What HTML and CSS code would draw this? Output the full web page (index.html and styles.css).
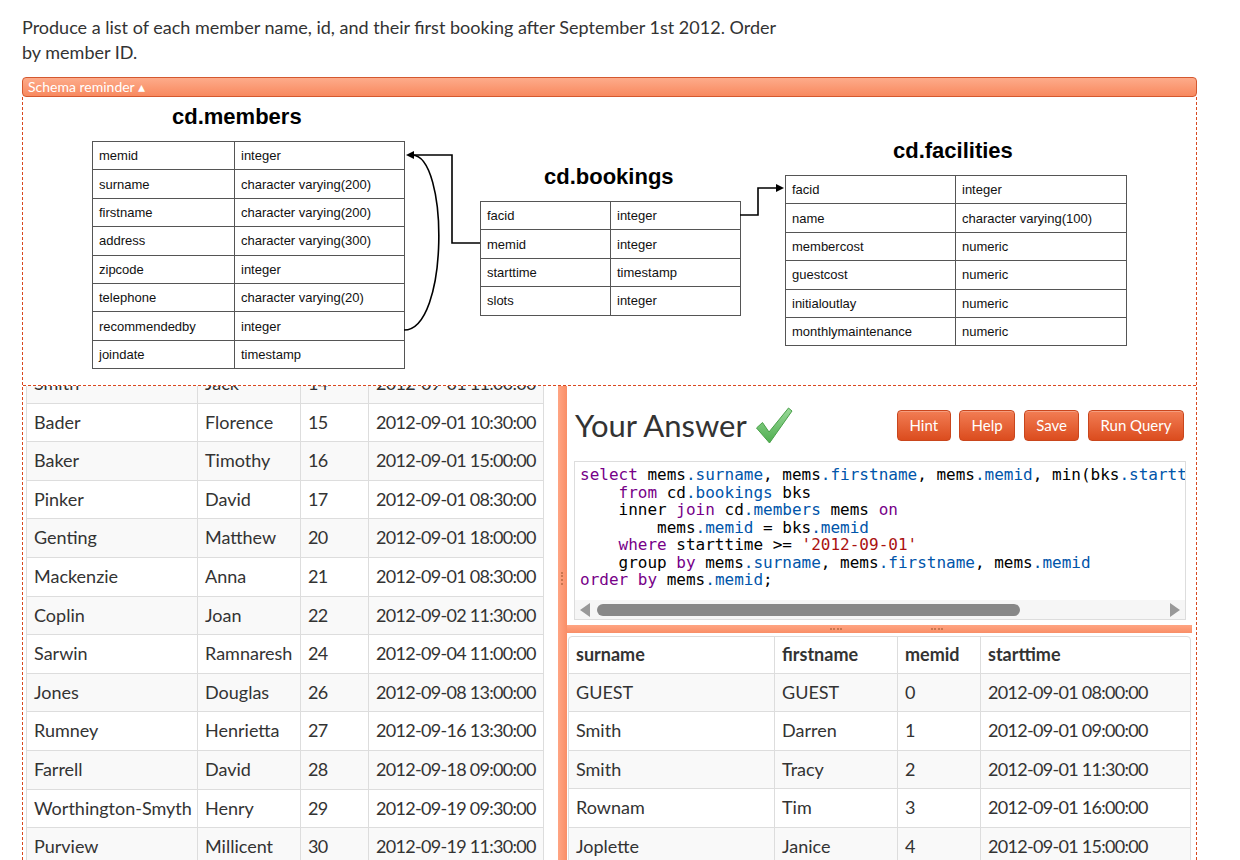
FILE: index.html
```html
<!DOCTYPE html>
<html>
<head>
<meta charset="utf-8">
<title>Exercise</title>
<link rel="stylesheet" href="styles.css">
</head>
<body>
<div class="page">
  <p class="question">Produce a list of each member name, id, and their first booking after September 1st 2012. Order by member ID.</p>
  <div class="schema-bar">Schema reminder ▴</div>
  <div class="main">
    <div class="schema-panel">
      <div class="diagram">
        <div class="title t-members">cd.members</div>
        <table class="schema s-members">
          <colgroup><col class="c142"><col class="c170"></colgroup>
          <tr><td>memid</td><td>integer</td></tr>
          <tr><td>surname</td><td>character varying(200)</td></tr>
          <tr><td>firstname</td><td>character varying(200)</td></tr>
          <tr><td>address</td><td>character varying(300)</td></tr>
          <tr><td>zipcode</td><td>integer</td></tr>
          <tr><td>telephone</td><td>character varying(20)</td></tr>
          <tr><td>recommendedby</td><td>integer</td></tr>
          <tr><td>joindate</td><td>timestamp</td></tr>
        </table>
        <div class="title t-bookings">cd.bookings</div>
        <table class="schema s-bookings">
          <colgroup><col class="c130"><col class="c130"></colgroup>
          <tr><td>facid</td><td>integer</td></tr>
          <tr><td>memid</td><td>integer</td></tr>
          <tr><td>starttime</td><td>timestamp</td></tr>
          <tr><td>slots</td><td>integer</td></tr>
        </table>
        <div class="title t-facilities">cd.facilities</div>
        <table class="schema s-facilities">
          <colgroup><col class="c170"><col class="c171"></colgroup>
          <tr><td>facid</td><td>integer</td></tr>
          <tr><td>name</td><td>character varying(100)</td></tr>
          <tr><td>membercost</td><td>numeric</td></tr>
          <tr><td>guestcost</td><td>numeric</td></tr>
          <tr><td>initialoutlay</td><td>numeric</td></tr>
          <tr><td>monthlymaintenance</td><td>numeric</td></tr>
        </table>
        <svg class="links" width="1173" height="288" viewBox="0 0 1173 288">
          <path d="M457 146 H429 V58 H389" fill="none" stroke="#000" stroke-width="1.6"/>
          <path d="M381 233 C426 233 426 58 389 58" fill="none" stroke="#000" stroke-width="1.6"/>
          <path d="M383 58 L391 54 L391 62 Z" fill="#000"/>
          <path d="M717 118 H735 V91 H755" fill="none" stroke="#000" stroke-width="1.6"/>
          <path d="M761 91 L753 87 L753 95 Z" fill="#000"/>
        </svg>
      </div>
    </div>

    <div class="left-pane">
      <table class="data data-left">
        <colgroup><col class="l1"><col class="l2"><col class="l3"><col class="l4"></colgroup>
        <tr><td>Smith</td><td>Jack</td><td>14</td><td>2012-09-01 11:00:00</td></tr>
        <tr><td>Bader</td><td>Florence</td><td>15</td><td>2012-09-01 10:30:00</td></tr>
        <tr><td>Baker</td><td>Timothy</td><td>16</td><td>2012-09-01 15:00:00</td></tr>
        <tr><td>Pinker</td><td>David</td><td>17</td><td>2012-09-01 08:30:00</td></tr>
        <tr><td>Genting</td><td>Matthew</td><td>20</td><td>2012-09-01 18:00:00</td></tr>
        <tr><td>Mackenzie</td><td>Anna</td><td>21</td><td>2012-09-01 08:30:00</td></tr>
        <tr><td>Coplin</td><td>Joan</td><td>22</td><td>2012-09-02 11:30:00</td></tr>
        <tr><td>Sarwin</td><td>Ramnaresh</td><td>24</td><td>2012-09-04 11:00:00</td></tr>
        <tr><td>Jones</td><td>Douglas</td><td>26</td><td>2012-09-08 13:00:00</td></tr>
        <tr><td>Rumney</td><td>Henrietta</td><td>27</td><td>2012-09-16 13:30:00</td></tr>
        <tr><td>Farrell</td><td>David</td><td>28</td><td>2012-09-18 09:00:00</td></tr>
        <tr><td>Worthington-Smyth</td><td>Henry</td><td>29</td><td>2012-09-19 09:30:00</td></tr>
        <tr><td>Purview</td><td>Millicent</td><td>30</td><td>2012-09-19 11:30:00</td></tr>
      </table>
    </div>

    <div class="vsplit"><span class="grip-v"></span></div>

    <div class="right-pane">
      <div class="answer-head">
        <h2 class="answer-title">Your Answer
          <svg class="check" width="38" height="37" viewBox="0 0 38 37">
            <defs>
              <linearGradient id="g" x1="0" y1="0" x2="0" y2="1">
                <stop offset="0" stop-color="#9ad99a"/>
                <stop offset="1" stop-color="#4fae4f"/>
              </linearGradient>
            </defs>
            <path d="M1.5 21 L7.5 15.5 L14 25 L33.5 1 L37 4 L14.5 36 Z" fill="url(#g)" stroke="#49a049" stroke-width="1" stroke-linejoin="round"/>
          </svg>
        </h2>
        <div class="buttons">
          <button class="btn">Hint</button>
          <button class="btn">Help</button>
          <button class="btn">Save</button>
          <button class="btn">Run Query</button>
        </div>
      </div>

      <div class="editor">
        <pre class="code"><span class="kw">select</span> mems<span class="pr">.surname</span>, mems<span class="pr">.firstname</span>, mems<span class="pr">.memid</span>, min(bks<span class="pr">.starttime</span>) <span class="kw">as</span> starttime
    <span class="kw">from</span> cd<span class="pr">.bookings</span> bks
    inner <span class="kw">join</span> cd<span class="pr">.members</span> mems <span class="kw">on</span>
        mems<span class="pr">.memid</span> = bks<span class="pr">.memid</span>
    <span class="kw">where</span> starttime &gt;= <span class="st">'2012-09-01'</span>
    group <span class="kw">by</span> mems<span class="pr">.surname</span>, mems<span class="pr">.firstname</span>, mems<span class="pr">.memid</span>
<span class="kw">order</span> <span class="kw">by</span> mems<span class="pr">.memid</span>;</pre>
        <div class="hscroll">
          <span class="arrow-left"></span>
          <span class="thumb"></span>
          <span class="arrow-right"></span>
        </div>
      </div>

      <div class="hsplit"><span class="grip g1"></span><span class="grip g2"></span></div>

      <div class="results">
        <table class="data data-right">
          <colgroup><col class="r1"><col class="r2"><col class="r3"><col class="r4"></colgroup>
          <tr class="head"><th>surname</th><th>firstname</th><th>memid</th><th>starttime</th></tr>
          <tr><td>GUEST</td><td>GUEST</td><td>0</td><td>2012-09-01 08:00:00</td></tr>
          <tr><td>Smith</td><td>Darren</td><td>1</td><td>2012-09-01 09:00:00</td></tr>
          <tr><td>Smith</td><td>Tracy</td><td>2</td><td>2012-09-01 11:30:00</td></tr>
          <tr><td>Rownam</td><td>Tim</td><td>3</td><td>2012-09-01 16:00:00</td></tr>
          <tr><td>Joplette</td><td>Janice</td><td>4</td><td>2012-09-01 15:00:00</td></tr>
        </table>
      </div>
    </div>
  </div>
</div>
</body>
</html>
```

FILE: styles.css
```css
* { box-sizing: border-box; }
html, body { margin: 0; padding: 0; background: #fff; overflow: hidden; }
body { font-family: Lato, "Open Sans", sans-serif; color: #333; }

.page { padding: 15px 0 0 22px; width: 1197px; }

.question { margin: 0 0 12px; font-size: 18px; line-height: 25px; max-width: 770px; }

.schema-bar {
  height: 20px;
  width: 1175px;
  padding-left: 5px;
  font-size: 14px;
  line-height: 18px;
  color: #fff;
  border: 1px solid #d4582f;
  border-radius: 4px;
  background: linear-gradient(#fdab8a, #f8895f);
}

.main {
  position: relative;
  display: flex;
  width: 1175px;
  height: 763px;
  overflow: hidden;
  border-left: 1px dashed #d9481f;
  border-right: 1px dashed #d9481f;
}

/* schema dropdown overlay */
.schema-panel {
  position: absolute;
  top: 0; left: 0; right: 0;
  height: 289px;
  background: #fff;
  border-bottom: 1px dashed #d9481f;
  z-index: 5;
}
.diagram { position: relative; width: 100%; height: 288px; }
.title {
  position: absolute;
  font-family: "Liberation Sans", Arial, sans-serif;
  font-weight: bold;
  font-size: 22px;
  line-height: 26px;
  color: #000;
}
.t-members { left: 149px; top: 7px; }
.t-bookings { left: 521px; top: 67px; }
.t-facilities { left: 870px; top: 41px; }

.schema {
  position: absolute;
  border-collapse: collapse;
  table-layout: fixed;
  font-family: "Liberation Sans", Arial, sans-serif;
  font-size: 13px;
  color: #111;
}
.schema td {
  border: 1px solid #555;
  height: 28.4px;
  padding: 0 6px;
  white-space: nowrap;
}
.s-members { left: 69px; top: 44px; width: 312px; }
.s-bookings { left: 457px; top: 104px; width: 260px; }
.s-facilities { left: 762px; top: 78px; width: 341px; }
.c142 { width: 142px; }
.c170 { width: 170px; }
.c171 { width: 171px; }
.c130 { width: 130px; }
.links { position: absolute; left: 0; top: 0; }

/* data tables */
.left-pane { width: 535px; padding: 267px 0 0 3px; flex: none; }
.data {
  border-collapse: collapse;
  table-layout: fixed;
  font-size: 18px;
  color: #333;
}
.data td, .data th {
  border: 1px solid #ddd;
  padding: 0 6px 0 7px;
  line-height: 37.6px;
  text-align: left;
  white-space: nowrap;
  overflow: hidden;
}
.data td:nth-child(3), .data td:nth-child(4) { letter-spacing: -0.7px; }
.data th { font-weight: bold; }
.data-left { width: 517px; }
.data-left tr:nth-child(odd) td { background: #f9f9f9; }
.l1 { width: 171px; } .l2 { width: 103px; } .l3 { width: 68px; } .l4 { width: 175px; }

.vsplit {
  flex: none;
  width: 9px;
  background: linear-gradient(to right, #ffa583, #f98e67);
  position: relative;
}
.grip-v {
  position: absolute;
  left: 3px; top: 475px;
  width: 2px; height: 13px;
  border-left: 2px dotted #c9764f;
}

.right-pane { width: 625px; flex: none; padding-top: 309px; }

.answer-head {
  display: flex;
  align-items: center;
  justify-content: space-between;
  height: 38px;
  padding: 0 8px;
  margin-bottom: 17px;
}
.answer-title {
  margin: 0;
  font-weight: normal;
  font-size: 31px;
  line-height: 38px;
  color: #333;
  display: flex;
  align-items: center;
  gap: 8px;
}
.check { display: block; }
.buttons { display: flex; gap: 8.5px; }
.btn {
  font-family: Lato, "Open Sans", sans-serif;
  font-size: 15px;
  color: #fff;
  height: 31px;
  padding: 0 11.5px;
  border: 1px solid #c9461d;
  border-radius: 4px;
  background: linear-gradient(#f27d54, #db4c1e);
  box-shadow: inset 0 1px 0 rgba(255,255,255,0.25);
}

.editor {
  width: 612px;
  margin-left: 7px;
  height: 159px;
  border: 1px solid #ddd;
  background: #fff;
  overflow: hidden;
}
.code {
  margin: 0;
  height: 138px;
  padding: 4px 5px 0;
  font-family: "DejaVu Sans Mono", "Liberation Mono", monospace;
  font-size: 16px;
  line-height: 17.5px;
  color: #000;
  white-space: pre;
  overflow: hidden;
}
.kw { color: #770088; }
.pr { color: #0055aa; }
.st { color: #aa1111; }

.hscroll {
  display: flex;
  align-items: center;
  height: 19px;
  padding: 0 5px;
  background: #f6f6f6;
}
.arrow-left {
  width: 0; height: 0;
  border-top: 7px solid transparent;
  border-bottom: 7px solid transparent;
  border-right: 10px solid #999;
}
.arrow-right {
  margin-left: auto;
  width: 0; height: 0;
  border-top: 7px solid transparent;
  border-bottom: 7px solid transparent;
  border-left: 10px solid #999;
}
.thumb {
  margin-left: 7px;
  width: 423px;
  height: 12px;
  border-radius: 6px;
  background: #888;
}

.hsplit {
  position: relative;
  height: 8px;
  margin: 5px 0 3px;
  background: linear-gradient(#ffa583, #f98e67);
}
.grip {
  position: absolute;
  top: 3px;
  width: 12px; height: 2px;
  border-top: 2px dotted #c9764f;
}
.g1 { left: 263px; }
.g2 { left: 364px; }

.results {
  margin: 0 1px;
  border: 1px solid #ddd;
  border-radius: 4px 4px 0 0;
  overflow: hidden;
}
.data-right { width: 623px; margin: -1px; }
.data-right tr:nth-child(even) td { background: #f9f9f9; }
.data-right th { border-top: none; line-height: 36.6px; }
.r1 { width: 206px; } .r2 { width: 123px; } .r3 { width: 83px; } .r4 { width: 211px; }
```
